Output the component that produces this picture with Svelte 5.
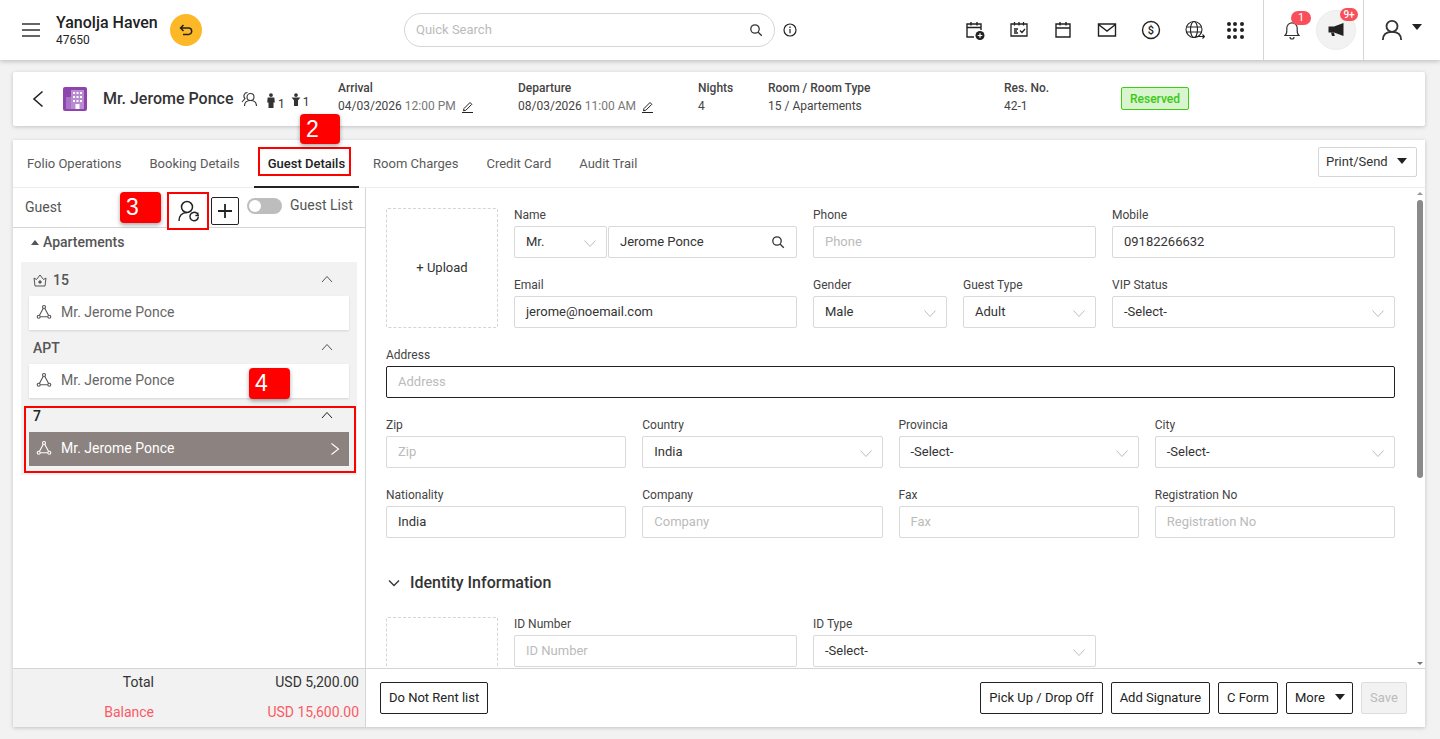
<script>
  const tabs = ['Folio Operations', 'Booking Details', 'Guest Details', 'Room Charges', 'Credit Card', 'Audit Trail'];
  const groups = [
    { name: '15', crown: true },
    { name: 'APT' },
    { name: '7', selected: true }
  ];
  const row3 = [
    { label: 'Zip', ph: 'Zip' },
    { label: 'Country', value: 'India', select: true },
    { label: 'Provincia', value: '-Select-', select: true },
    { label: 'City', value: '-Select-', select: true },
    { label: 'Nationality', value: 'India' },
    { label: 'Company', ph: 'Company' },
    { label: 'Fax', ph: 'Fax' },
    { label: 'Registration No', ph: 'Registration No' }
  ];
</script>

{#snippet chev()}
  <svg class="chev" width="14" height="14" viewBox="0 0 14 14"><path d="M1.5 4.5 7 10.5l5.5-6" fill="none" stroke="#bdbdbd" stroke-width="1"/></svg>
{/snippet}

{#snippet net(color)}
  <svg width="16" height="16" viewBox="0 0 16 16" fill="none" stroke={color} stroke-width="1.100"><circle cx="8" cy="3" r="1.500"/><circle cx="2.700" cy="12.700" r="1.500"/><circle cx="13.300" cy="12.700" r="1.500"/><path d="M7.300 4.300 3.500 11.300M8.700 4.300l3.800 7M4.300 12.700h7.400"/></svg>
{/snippet}

{#snippet field(f)}
  <div class="field">
    <span class="lbl">{f.label}</span>
    <div class="inp" class:ph={f.ph}>{f.ph ?? f.value}{#if f.select}{@render chev()}{/if}</div>
  </div>
{/snippet}

<div class="page">
  <header class="top">
    <svg class="burger" width="18" height="14" viewBox="0 0 18 14"><path d="M0 1h18M0 7h18M0 13h18" stroke="#333" stroke-width="1.4"/></svg>
    <div class="prop"><b>Yanolja Haven</b><span>47650</span></div>
    <div class="undo">
      <svg width="14" height="12" viewBox="0 0 14 12" fill="none" stroke="#222" stroke-width="1.500"><path d="M4.500 1 1.500 4l3 3M2 4h7.500a3.200 3.200 0 0 1 0 6.400H4"/></svg>
    </div>
    <div class="search">
      <span>Quick Search</span>
      <svg width="14" height="14" viewBox="0 0 14 14" fill="none" stroke="#333" stroke-width="1.3"><circle cx="6" cy="6" r="4.2"/><path d="m9.2 9.2 3.6 3.6"/></svg>
    </div>
    <svg class="info" width="14" height="14" viewBox="0 0 14 14" fill="none" stroke="#222" stroke-width="1.2"><circle cx="7" cy="7" r="6"/><path d="M7 6v4.2M7 3.600v1.300"/></svg>

    <div class="tools">
      <span class="tool"><svg width="20" height="20" viewBox="0 0 20 20" fill="none" stroke="#222" stroke-width="1.400"><path d="M9 17H2V4h14v6M2 7.500h14M6 2v3.500M12 2v3.500"/><circle cx="15" cy="15.500" r="4.500" fill="#222" stroke="none"/><path d="M15 13.200v4.600M12.700 15.500h4.600" stroke="#fff" stroke-width="1.200"/></svg></span>
      <span class="tool"><svg width="20" height="20" viewBox="0 0 20 20" fill="none" stroke="#222" stroke-width="1.300"><path d="M2 4h16v12H2zM5.500 2v3.500M10 2v3.500M14.500 2v3.500M5 9h4M5 11h3M5 13h4M11 10.500l2 2 3-3.500"/></svg></span>
      <span class="tool"><svg width="20" height="20" viewBox="0 0 20 20" fill="none" stroke="#222" stroke-width="1.400"><path d="M3 4h14v13H3zM3 8h14M7 2v3.500M13 2v3.500"/></svg></span>
      <span class="tool"><svg width="20" height="20" viewBox="0 0 20 20" fill="none" stroke="#222" stroke-width="1.400"><path d="M1.500 4h17v12h-17zM1.500 4.500 10 11l8.500-6.500"/></svg></span>
      <span class="tool"><svg width="20" height="20" viewBox="0 0 20 20" fill="none" stroke="#222" stroke-width="1.400"><circle cx="10" cy="10" r="8.500"/><text x="10" y="14" font-size="11" font-family="Roboto" text-anchor="middle" fill="#222" stroke="none" font-weight="500">$</text></svg></span>
      <span class="tool"><svg width="20" height="20" viewBox="0 0 20 20" fill="none" stroke="#222" stroke-width="1.100"><circle cx="9" cy="9.500" r="8"/><ellipse cx="9" cy="9.500" rx="3.500" ry="8"/><path d="M1.500 7h15M1.500 12h15"/><path d="M11 16.500h8.500M17.500 14.500l2 2-2 2" stroke-width="1.200" stroke="#222"/></svg></span>
      <span class="tool grid9">{#each Array(9) as _}<i></i>{/each}</span>
    </div>
    <div class="alerts">
      <span class="bell">
        <svg width="16" height="20" viewBox="0 0 16 20" fill="none" stroke="#333" stroke-width="1.2"><path d="M1 15.500c1.500-1 1.800-2.500 1.800-5V8a5.200 5.200 0 0 1 10.400 0v2.500c0 2.500.3 4 1.800 5zM6 17a2 2 0 0 0 4 0"/></svg>
        <em class="n1">1</em>
      </span>
      <span class="mega">
        <svg width="18" height="16" viewBox="0 0 18 16"><path d="M16.500 1v13L7 10.500H1.500v-6H7z" fill="#222"/><path d="M4 10.500h3l.8 3.500H5z" fill="#222"/></svg>
        <em class="n9">9+</em>
      </span>
    </div>
    <div class="me">
      <svg width="22" height="22" viewBox="0 0 24 24" fill="none" stroke="#333" stroke-width="2"><circle cx="12" cy="8" r="6"/><path d="M2 23c0-6 4-9 10-9s10 3 10 9"/></svg>
      <i class="caret big"></i>
    </div>
  </header>

  <section class="bar">
    <svg class="back" width="14" height="18" viewBox="0 0 14 18"><path d="M11.500 1.500 3 9l8.500 7.500" fill="none" stroke="#222" stroke-width="1.600"/></svg>
    <svg class="hotel" width="24" height="24" viewBox="0 0 24 24"><rect width="24" height="24" rx="2" fill="#8e44ad"/><rect x="8" y="3" width="13" height="19" fill="#b98bd0"/><rect x="3" y="10" width="5" height="12" fill="#a873c4"/><path d="M10 5h2v2h-2zM13.500 5h2v2h-2zM17 5h2v2h-2zM10 9h2v2h-2zM13.500 9h2v2h-2zM17 9h2v2h-2zM10 13h2v2h-2zM13.500 13h2v2h-2zM17 13h2v2h-2zM12.500 17h4v5h-4z" fill="#fff"/></svg>
    <h1>Mr. Jerome Ponce</h1>
    <svg class="pp" width="16" height="16" viewBox="0 0 16 16" fill="none" stroke="#333" stroke-width="1.100"><circle cx="9.500" cy="6" r="3.500"/><path d="M3.500 15c0-3.500 2.500-5.500 6-5.500s6 2 6 5.500M6.500 1.500A3.500 3.500 0 0 0 4 7.500L1 11"/></svg>
    <span class="pax"><svg width="10" height="17" viewBox="0 0 12 18" fill="#333"><circle cx="6" cy="2.500" r="2.300"/><path d="M2 5.500h8l.6 6H9V18H3v-6.500H1.400z"/></svg><small>1</small></span>
    <span class="pax kid"><svg width="10" height="13" viewBox="0 0 12 16" fill="#333"><circle cx="6" cy="2.500" r="2.300"/><path d="M.5 5.500h11l-3 3.500v7H3.500V9z"/></svg><small>1</small></span>
    <div class="info-c arr"><b>Arrival</b><p>04/03/2026 <span>12:00 PM</span> <svg width="13" height="13" viewBox="0 0 13 13" fill="none" stroke="#222"><path d="m3 8.500 6-6 1.800 1.800-6 6-2.300.5zM1 12.500h11"/></svg></p></div>
    <div class="info-c dep"><b>Departure</b><p>08/03/2026 <span>11:00 AM</span> <svg width="13" height="13" viewBox="0 0 13 13" fill="none" stroke="#222"><path d="m3 8.500 6-6 1.800 1.800-6 6-2.300.5zM1 12.500h11"/></svg></p></div>
    <div class="info-c nts"><b>Nights</b><p>4</p></div>
    <div class="info-c rm"><b>Room / Room Type</b><p>15 / Apartements</p></div>
    <div class="info-c res"><b>Res. No.</b><p>42-1</p></div>
    <span class="status">Reserved</span>
  </section>

  <main class="card">
    <nav class="tabs">
      {#each tabs as t, i}
        <span class="tab" class:on={i === 2}>{t}</span>
      {/each}
      <button class="print">Print/Send <i class="caret"></i></button>
      <i class="red r-tab"></i>
      <i class="badge b2">2</i>
    </nav>

    <div class="body">
      <aside class="side">
        <div class="guest-head">
          <span class="g-title">Guest</span>
          <i class="badge b3">3</i>
          <span class="iconbtn">
            <svg width="24" height="24" viewBox="0 0 24 24" fill="none" stroke="#222" stroke-width="1.500"><circle cx="11" cy="8" r="5.500"/><path d="M3 22c0-5 3-8.500 8-8.500"/><path d="M22.300 17.500a4.200 4.200 0 1 1-1.300-3"/><path d="m21.500 13.500.6 2.700-2.700.2"/></svg>
          </span>
          <span class="plus"><svg width="16" height="16" viewBox="0 0 16 16"><path d="M8 1v14M1 8h14" stroke="#222" stroke-width="1.800"/></svg></span>
          <span class="toggle"><i></i></span>
          <span class="g-list">Guest List</span>
        </div>
        <div class="apt"><i></i>Apartements</div>
        <div class="groups">
          {#each groups as g}
            <div class="group" class:sel={g.selected}>
              <div class="g-row">
                {#if g.crown}
                  <svg width="14" height="14" viewBox="0 0 14 14" fill="none" stroke="#555" stroke-width="1"><path d="M1 5l2.500 1.500L7 2l3.500 4.500L13 5l-1 8H2z"/><circle cx="7" cy="9" r="1.200" fill="#555"/></svg>
                {/if}
                <b>{g.name}</b>
                <svg class="up" width="12" height="8" viewBox="0 0 12 8"><path d="M1 7 6 1.500 11 7" fill="none" stroke={g.selected ? '#222' : '#555'} stroke-width="1"/></svg>
              </div>
              <div class="g-card">
                {@render net(g.selected ? '#fff' : '#555')}
                <span>Mr. Jerome Ponce</span>
                {#if g.selected}
                  <svg class="gt" width="10" height="14" viewBox="0 0 10 14"><path d="M1.500 1.500 8.500 7l-7 5.500" fill="none" stroke="#fff" stroke-width="1.100"/></svg>
                {/if}
              </div>
            </div>
          {/each}
          <i class="red r-sel"></i>
          <i class="badge b4">4</i>
        </div>
      </aside>

      <div class="form">
        <div class="top-form">
          <div class="upload">+ Upload</div>
          <div class="grid3">
            <div class="field">
              <span class="lbl">Name</span>
              <div class="name-pair">
                <div class="inp mr">Mr.{@render chev()}</div>
                <div class="inp nm">Jerome Ponce
                  <svg class="mag" width="14" height="14" viewBox="0 0 14 14" fill="none" stroke="#333" stroke-width="1.300"><circle cx="6" cy="6" r="4.200"/><path d="m9.200 9.200 3.600 3.600"/></svg>
                </div>
              </div>
            </div>
            {@render field({ label: 'Phone', ph: 'Phone' })}
            {@render field({ label: 'Mobile', value: '09182266632' })}
            {@render field({ label: 'Email', value: 'jerome@noemail.com' })}
            <div class="pair">
              {@render field({ label: 'Gender', value: 'Male', select: true })}
              {@render field({ label: 'Guest Type', value: 'Adult', select: true })}
            </div>
            {@render field({ label: 'VIP Status', value: '-Select-', select: true })}
          </div>
        </div>
        <div class="field">
          <span class="lbl">Address</span>
          <div class="inp ph dark">Address</div>
        </div>
        <div class="grid4">
          {#each row3 as f}
            {@render field(f)}
          {/each}
        </div>
        <h2 class="identity">
          <svg width="12" height="8" viewBox="0 0 12 8"><path d="M1 1.500 6 6.500l5-5" fill="none" stroke="#333" stroke-width="1.300"/></svg>
          Identity Information
        </h2>
        <div class="top-form id">
          <div class="upload small"></div>
          <div class="grid3">
            {@render field({ label: 'ID Number', ph: 'ID Number' })}
            {@render field({ label: 'ID Type', value: '-Select-', select: true })}
          </div>
        </div>
        <div class="sb"><i class="arrow-up"></i><i class="thumb"></i><i class="arrow-dn"></i></div>
      </div>
    </div>

    <footer class="foot">
      <div class="totals">
        <div><span>Total</span><span>USD 5,200.00</span></div>
        <div class="bal"><span>Balance</span><span>USD 15,600.00</span></div>
      </div>
      <div class="actions">
        <button class="btn">Do Not Rent list</button>
        <span class="grow"></span>
        <button class="btn">Pick Up / Drop Off</button>
        <button class="btn">Add Signature</button>
        <button class="btn">C Form</button>
        <button class="btn more">More <i class="caret"></i></button>
        <button class="btn save">Save</button>
      </div>
    </footer>
  </main>
</div>

<style>
  :global(body) { margin: 0; background: #f2f2f2; }
  * { box-sizing: border-box; }
  .page { height: 739px; overflow: hidden; font: 13px/1.2 Roboto, sans-serif; color: #3a3a3a; background: #f2f2f2; }
  i, em { font-style: normal; }

  .top { height: 60px; background: #fff; box-shadow: 0 1px 5px rgba(0,0,0,.25); display: flex; align-items: center; padding-left: 22px; position: relative; }
  .burger { margin-right: 16px; flex: none; }
  .prop { display: flex; flex-direction: column; width: 102px; margin-right: 12px; color: #222; padding-top: 1px; }
  .prop b { font-size: 16px; font-weight: 500; line-height: 19px; white-space: nowrap; }
  .prop span { font-size: 12px; line-height: 16px; }
  .undo { width: 32px; height: 32px; border-radius: 50%; background: #fdb827; display: flex; align-items: center; justify-content: center; }
  .search { margin-left: 202px; width: 371px; height: 34px; border: 1px solid #d5d5d5; border-radius: 17px; display: flex; align-items: center; justify-content: space-between; padding: 0 11px; color: #bbb; }
  .info { margin-left: 8px; }
  .tools { margin-left: auto; display: flex; align-items: center; height: 60px; }
  .tool { width: 44px; display: flex; justify-content: center; align-items: center; }
  .grid9 { width: 16px; margin: 0 20px 0 10px; display: grid; grid-template-columns: repeat(3, 4px); gap: 2.500px; }
  .grid9 i { width: 4px; height: 4px; border-radius: 50%; background: #222; }
  .alerts { width: 101px; height: 60px; border-left: 1px solid #d5d5d5; border-right: 1px solid #d5d5d5; display: flex; align-items: center; position: relative; }
  .bell { margin-left: 20px; display: flex; position: relative; }
  .n1 { position: absolute; left: 7px; top: -9px; width: 20px; height: 14px; border-radius: 7px; background: #fa4f5a; color: #fff; font-size: 11px; line-height: 14px; text-align: center; }
  .mega { margin-left: 16px; width: 40px; height: 40px; border-radius: 50%; background: #f2f2f2; border: 1px solid #ececec; display: flex; align-items: center; justify-content: center; position: relative; }
  .n9 { position: absolute; right: -3px; top: -3px; width: 18px; height: 13px; border-radius: 7px; background: #fa4f5a; color: #fff; font-size: 10px; line-height: 13px; text-align: center; font-weight: 500; }
  .me { width: 76px; display: flex; align-items: center; padding-left: 17px; gap: 9px; }
  .caret { display: inline-block; width: 0; height: 0; border-left: 5px solid transparent; border-right: 5px solid transparent; border-top: 6px solid #222; }
  .caret.big { margin-bottom: 6px; }

  .bar { margin: 12px 15px 0 13px; height: 54px; background: #fff; border-radius: 2px; box-shadow: 0 1px 4px rgba(0,0,0,.2); display: flex; align-items: center; position: relative; padding-left: 18px; }
  .back { flex: none; }
  .hotel { margin-left: 18px; flex: none; }
  h1 { margin: 0 0 0 16px; font-size: 16px; font-weight: 500; color: #333; white-space: nowrap; width: 130px; }
  .pp { margin-left: 8px; }
  .pax { display: flex; align-items: flex-end; margin-left: 9px; color: #333; gap: 2px; position: relative; top: 1px; }
  .pax small { font-size: 12px; line-height: 10px; }
  .kid { margin-left: 6px; }
  .kid svg { margin-bottom: 1px; }
  .info-c { position: absolute; top: 9px; font-size: 12px; white-space: nowrap; color: #444; }
  .info-c b { display: block; font-weight: 500; line-height: 14px; color: #444; }
  .info-c p { margin: 4px 0 0; line-height: 15px; display: flex; gap: 3px; align-items: center; }
  .info-c p span { color: #777; }
  .info-c svg { margin-left: 2px; }
  .arr { left: 325px; } .dep { left: 505px; } .nts { left: 685px; } .rm { left: 755px; } .res { left: 991px; }
  .status { position: absolute; left: 1108px; top: 15px; width: 68px; height: 23px; background: #d8f5d0; border: 1px solid #3ccf10; border-radius: 2px; color: #3cc814; font-size: 12px; font-weight: 500; line-height: 22px; text-align: center; }

  .card { margin: 14px 15px 0 13px; height: 587px; background: #fff; box-shadow: 0 1px 4px rgba(0,0,0,.2); display: flex; flex-direction: column; }
  .tabs { height: 48px; flex: none; display: flex; border-bottom: 1px solid #ececec; position: relative; }
  .tab { padding: 16px 14px 0; height: 48px; white-space: nowrap; color: #5a5a5a; }
  .tab.on { color: #222; font-weight: 500; border-bottom: 2px solid #222; }
  .print { position: absolute; right: 8px; top: 7px; width: 99px; height: 30px; background: #fff; border: 1px solid #d5d5d5; border-radius: 2px; font: 13px Roboto, sans-serif; color: #333; display: flex; align-items: center; gap: 9px; padding: 0 7px 2px; white-space: nowrap; }
  .red { position: absolute; border: 2px solid #f00; pointer-events: none; display: block; }
  .r-tab { left: 245px; top: 7px; width: 93px; height: 29px; }
  .badge { position: absolute; background: #f00; color: #fff; border-radius: 4px; font-size: 23px; width: 41px; height: 31px; line-height: 30px; padding-left: 6px; text-align: left; box-shadow: 0 2px 4px rgba(0,0,0,.35); z-index: 2; font-family: "Liberation Sans", sans-serif; }
  .b2 { left: 287px; top: -26px; width: 40px; height: 30px; }
  .b3 { left: 107px; top: 4px; }
  .b4 { left: 228px; top: 106px; }

  .body { flex: 1; display: flex; min-height: 0; }
  .side { width: 353px; flex: none; border-right: 1px solid #d5d5d5; position: relative; }
  .guest-head { height: 40px; border-bottom: 1px solid #d5d5d5; display: flex; align-items: center; position: relative; font-size: 14px; }
  .g-title { position: absolute; left: 12px; top: 11px; color: #555; }
  .iconbtn { position: absolute; left: 154px; top: 4px; width: 42px; height: 38px; border: 2px solid #f00; display: flex; align-items: center; justify-content: center; background: #fff; z-index: 1; }
  .plus { position: absolute; left: 198px; top: 9px; width: 28px; height: 28px; border: 1px solid #222; border-radius: 2px; display: flex; align-items: center; justify-content: center; }
  .toggle { position: absolute; left: 234px; top: 10px; width: 35px; height: 16px; border-radius: 8px; background: #bdbdbd; }
  .toggle i { position: absolute; left: 2px; top: 2px; width: 12px; height: 12px; border-radius: 50%; background: #fff; }
  .g-list { position: absolute; left: 277px; top: 9px; color: #555; }
  .apt { height: 34px; padding: 0 0 5px 18px; display: flex; align-items: center; gap: 4px; color: #555; font-weight: 500; font-size: 14px; }
  .apt i { width: 0; height: 0; border-left: 4px solid transparent; border-right: 4px solid transparent; border-bottom: 5px solid #555; }
  .groups { margin: 0 8px 0 8px; background: #f2f2f2; position: relative; padding: 0 8px 9px; }
  .g-row { height: 34px; padding: 2px 0 0 4px; display: flex; align-items: center; gap: 6px; color: #555; position: relative; }
  .g-row b { font-weight: 500; font-size: 14px; }
  .sel .g-row { color: #222; }
  .up { position: absolute; right: 16px; top: 13px; }
  .g-card { height: 34px; background: #fff; box-shadow: 0 1px 2px rgba(0,0,0,.12); display: flex; align-items: center; padding: 0 0 2px 7px; gap: 9px; color: #666; font-size: 14px; position: relative; }
  .sel .g-card { background: #8c8280; color: #fff; box-shadow: none; }
  .gt { position: absolute; right: 9px; top: 10px; }
  .r-sel { left: 3px; top: 144px; width: 332px; height: 67px; }

  .form { flex: 1; position: relative; overflow: hidden; padding: 20px 30px 0 20px; height: 480px; }
  .top-form { display: flex; gap: 16px; }
  .upload { width: 112px; height: 120px; border: 1px dashed #d5d5d5; border-radius: 2px; flex: none; display: flex; align-items: center; justify-content: center; color: #333; }
  .grid3 { flex: 1; display: grid; grid-template-columns: repeat(3, 1fr); gap: 0 16px; align-content: start; }
  .field { height: 70px; min-width: 0; }
  .lbl { display: block; font-size: 12px; line-height: 14px; margin: 0 0 4px; color: #444; }
  .inp { height: 32px; border: 1px solid #d9d9d9; border-radius: 2px; padding: 0 11px; display: flex; align-items: center; color: #333; position: relative; white-space: nowrap; background: #fff; }
  .inp.ph { color: #bbb; }
  .inp.dark { border-color: #222; }
  .chev { position: absolute; right: 9px; top: 9px; }
  .name-pair { display: flex; gap: 1px; }
  .mr { width: 93px; flex: none; }
  .nm { flex: 1; }
  .mag { position: absolute; right: 11px; top: 8px; }
  .pair { display: grid; grid-template-columns: 134px 1fr; gap: 16px; }
  .grid4 { display: grid; grid-template-columns: repeat(4, 1fr); gap: 0 16px; }
  .identity { margin: 15px 0 26px 2px; font-size: 16px; font-weight: 500; color: #333; display: flex; align-items: center; gap: 10px; line-height: 20px; }
  .id { margin-top: -2px; }
  .upload.small { height: 90px; }
  .sb { position: absolute; right: 1px; top: 0; bottom: 0; width: 8px; }
  .thumb { position: absolute; left: 1px; top: 12px; width: 6px; height: 278px; border-radius: 3px; background: #8a8a8a; }
  .arrow-up, .arrow-dn { position: absolute; left: 1px; width: 0; height: 0; border-left: 3px solid transparent; border-right: 3px solid transparent; }
  .arrow-up { top: 4px; border-bottom: 3px solid #999; }
  .arrow-dn { bottom: 3px; border-top: 3px solid #777; }

  .foot { height: 59px; flex: none; display: flex; border-top: 1px solid #d5d5d5; }
  .totals { width: 353px; flex: none; background: #f2f2f2; border-right: 1px solid #d5d5d5; padding: 0 6px 0 0; font-size: 14px; color: #333; display: flex; flex-direction: column; gap: 4px; }
  .totals div { display: flex; justify-content: space-between; line-height: 17px; height: 26px; align-items: center; }
  .totals span:first-child { width: 141px; text-align: right; }
  .bal { color: #fa5a64; }
  .actions { flex: 1; display: flex; gap: 8px; align-items: flex-start; padding: 13px 18px 0 14px; }
  .grow { flex: 1; }
  .btn { height: 32px; background: #fff; border: 1px solid #222; border-radius: 2px; font: 13px Roboto, sans-serif; color: #222; padding: 0 8px 2px; white-space: nowrap; display: flex; align-items: center; }
  .more { gap: 10px; width: 67px; }
  .save { width: 46px; background: #f2f2f2; border-color: #ddd; color: #bbb; justify-content: center; }
</style>
